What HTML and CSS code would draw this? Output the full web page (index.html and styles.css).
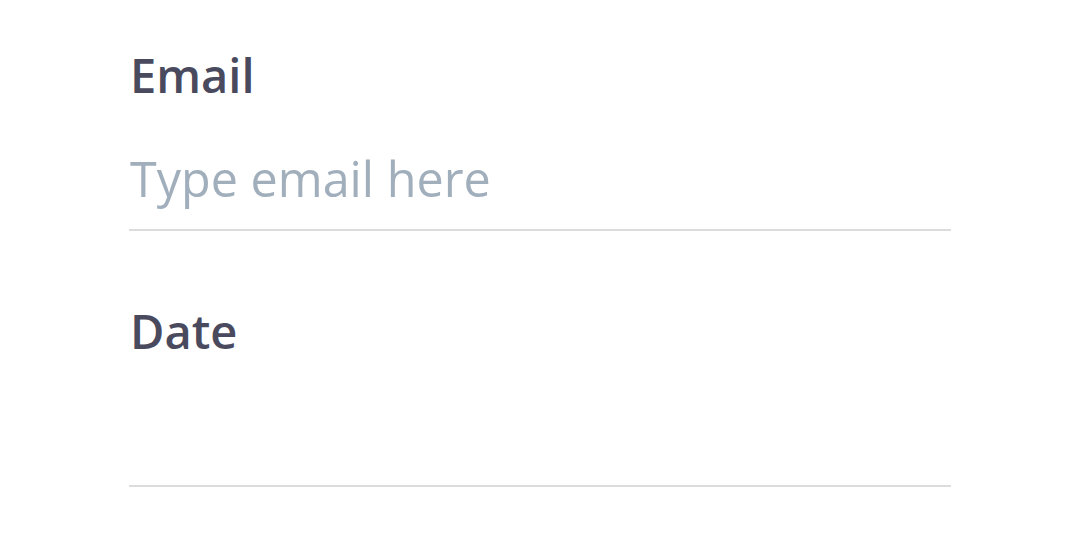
FILE: index.html
```html
<!DOCTYPE html>
<html>
<head>
<meta charset="utf-8">
<link rel="stylesheet" href="styles.css">
</head>
<body>
<form class="form">
  <div class="field">
    <label class="label">Email</label>
    <div class="input placeholder">Type email here</div>
  </div>
  <div class="field">
    <label class="label">Date</label>
    <div class="input"></div>
  </div>
</form>
</body>
</html>
```

FILE: styles.css
```css
html, body {
  margin: 0;
  padding: 0;
  background: #ffffff;
}
body {
  font-family: "Open Sans", "DejaVu Sans", sans-serif;
}
.form {
  display: flex;
  flex-direction: column;
  width: 822px;
  margin-left: 129px;
  padding-top: 47px;
  gap: 72px;
}
.field {
  display: flex;
  flex-direction: column;
}
.label {
  display: block;
  font-size: 47px;
  font-weight: 600;
  color: #4a4a5e;
  line-height: 56px;
  padding-left: 1px;
}
.input {
  height: 128px;
  border-bottom: 2px solid #dcdcdc;
  font-size: 48.5px;
  color: #a1aebb;
  line-height: 60px;
  padding-top: 45px;
  box-sizing: border-box;
  padding-left: 1px;
}
```
